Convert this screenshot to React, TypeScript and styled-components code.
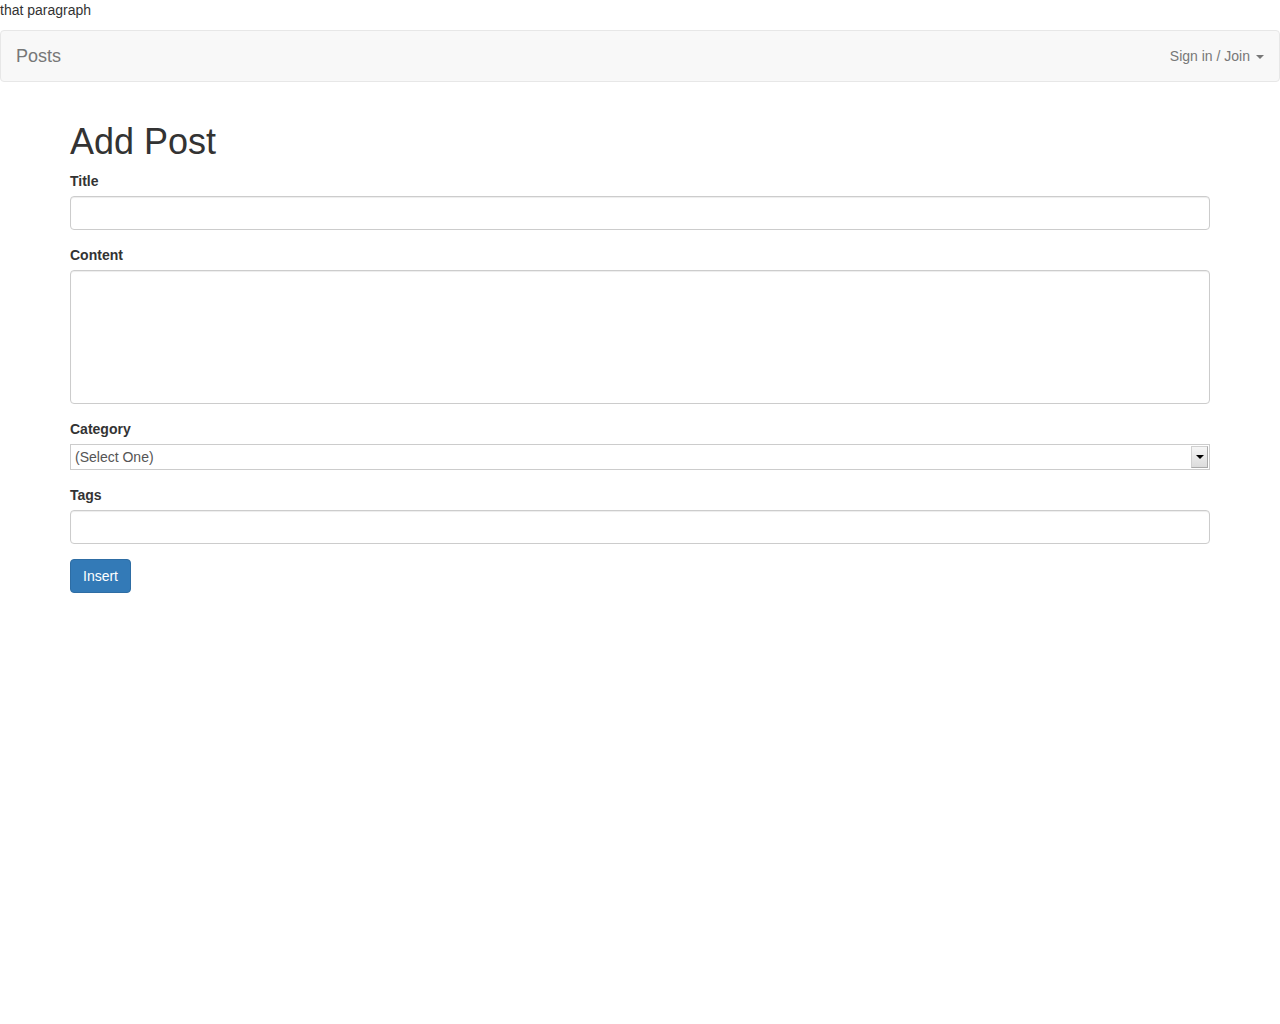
import React from "react";
import styled, { createGlobalStyle } from "styled-components";

const Global = createGlobalStyle`
  html, body { margin: 0; padding: 0; background: #fff; }
  body {
    font-family: "Liberation Sans", Arial, Helvetica, sans-serif;
    font-size: 14px;
    line-height: 20px;
    color: #333;
  }
  * { box-sizing: border-box; }
`;

const Para = styled.p`
  margin: 0 0 10px;
`;

const Navbar = styled.nav`
  display: flex;
  justify-content: space-between;
  align-items: center;
  height: 52px;
  background: #f8f8f8;
  border: 1px solid #e7e7e7;
  border-radius: 4px;
  margin-bottom: 20px;
`;

const Brand = styled.a`
  font-size: 18px;
  line-height: 20px;
  color: #777;
  padding: 15px;
`;

const NavLink = styled.a`
  display: flex;
  align-items: center;
  gap: 6px;
  font-size: 14px;
  color: #777;
  padding: 15px;
`;

const Caret = styled.span`
  display: inline-block;
  width: 0;
  height: 0;
  border-top: 4px solid #777;
  border-left: 4px solid transparent;
  border-right: 4px solid transparent;
  margin-top: 2px;
`;

const Container = styled.main`
  display: flow-root;
  width: 1170px;
  margin: 0 auto;
  padding: 0 15px;
`;

const Heading = styled.h1`
  font-size: 36px;
  font-weight: 500;
  line-height: 39px;
  margin: 20px 0 10px;
  color: #333;
`;

const Form = styled.form`
  display: flex;
  flex-direction: column;
`;

const Group = styled.div`
  display: flex;
  flex-direction: column;
  margin-bottom: 15px;
`;

const Label = styled.label`
  font-weight: bold;
  margin-bottom: 5px;
  line-height: 20px;
`;

const Input = styled.div<{ $h: number }>`
  height: ${(p) => p.$h}px;
  border: 1px solid #ccc;
  border-radius: 4px;
  box-shadow: inset 0 1px 1px rgba(0, 0, 0, 0.075);
  background: #fff;
`;

const Select = styled.div`
  display: flex;
  align-items: center;
  justify-content: space-between;
  height: 26px;
  border: 1px solid #ccc;
  background: #fff;
  padding: 1px 1px 1px 4px;
  font-size: 14px;
  color: #555;
`;

const SelectButton = styled.span`
  display: flex;
  align-items: center;
  justify-content: center;
  width: 17px;
  height: 22px;
  border: 1px solid #d0d0d0;
  border-right-color: #aaa;
  border-bottom-color: #aaa;
  background: linear-gradient(#f6f6f6, #dcdcdc);
`;

const Arrow = styled.span`
  width: 0;
  height: 0;
  border-top: 4px solid #000;
  border-left: 4px solid transparent;
  border-right: 4px solid transparent;
`;

const Button = styled.button`
  align-self: flex-start;
  height: 34px;
  padding: 6px 12px;
  font-family: inherit;
  font-size: 14px;
  line-height: 20px;
  color: #fff;
  background: #337ab7;
  border: 1px solid #2e6da4;
  border-radius: 4px;
`;

export default function App() {
  return (
    <>
      <Global />
      <Para>that paragraph</Para>
      <Navbar>
        <Brand>Posts</Brand>
        <NavLink>
          Sign in / Join <Caret />
        </NavLink>
      </Navbar>
      <Container>
        <Heading>Add Post</Heading>
        <Form>
          <Group>
            <Label>Title</Label>
            <Input $h={34} />
          </Group>
          <Group>
            <Label>Content</Label>
            <Input $h={134} />
          </Group>
          <Group>
            <Label>Category</Label>
            <Select>
              <span>(Select One)</span>
              <SelectButton>
                <Arrow />
              </SelectButton>
            </Select>
          </Group>
          <Group>
            <Label>Tags</Label>
            <Input $h={34} />
          </Group>
          <Button type="button">Insert</Button>
        </Form>
      </Container>
    </>
  );
}
